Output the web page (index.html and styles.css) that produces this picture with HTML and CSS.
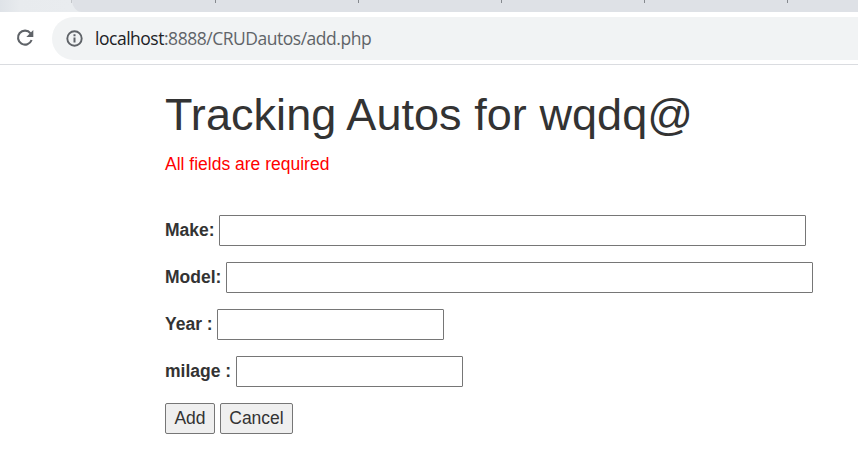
FILE: index.html
```html
<!DOCTYPE html>
<html lang="en">
<head>
<meta charset="utf-8">
<title>Tracking Autos</title>
<link rel="stylesheet" href="styles.css">
</head>
<body>
<header class="browser">
  <div class="tabs">
    <div class="tab-shade"><div class="tab-rest"></div></div>
    <i class="tick first"></i><i class="tick"></i><i class="tick"></i><i class="tick"></i><i class="tick"></i><i class="tick"></i>
  </div>
  <div class="toolbar">
    <svg class="reload" width="18" height="18" viewBox="0 0 18 18"><path d="M14.5 4.3A7 7 0 1 0 15.6 11" fill="none" stroke="#5f6368" stroke-width="2.1"/><path d="M17.3 1v7H10.3z" fill="#5f6368"/></svg>
    <div class="omnibox">
      <svg class="info" width="17" height="17" viewBox="0 0 17 17"><circle cx="8.5" cy="8.5" r="7.2" fill="none" stroke="#5f6368" stroke-width="1.9"/><path d="M7.5 4.2h2v2h-2zM7.5 7.5h2v5h-2z" fill="#5f6368"/></svg>
      <span class="url"><span class="host">localhost</span><span class="path">:8888/CRUDautos/add.php</span></span>
    </div>
  </div>
</header>
<main class="container">
  <h1>Tracking Autos for wqdq@</h1>
  <p class="error">All fields are required</p>
  <form>
    <div class="row"><label class="make" for="make">Make:</label><input id="make" class="wide" type="text"></div>
    <div class="row"><label class="model" for="model">Model:</label><input id="model" class="wide" type="text"></div>
    <div class="row"><label class="year" for="year">Year :</label><input id="year" type="text"></div>
    <div class="row"><label class="milage" for="milage">milage :</label><input id="milage" type="text"></div>
    <div class="row"><button class="add" type="button">Add</button><button class="cancel" type="button">Cancel</button></div>
  </form>
</main>
</body>
</html>
```
FILE: styles.css
```css
* { box-sizing: border-box; }
body {
  margin: 0;
  height: 451px;
  overflow: hidden;
  background: #fff;
  color: #333;
  font: 17.5px/25px "Liberation Sans", Arial, sans-serif;
}
.browser { height: 65px; border-bottom: 1px solid #dadce0; }
.tabs {
  position: relative;
  display: flex;
  height: 12px;
  padding-left: 71px;
  background: linear-gradient(90deg, #dfe3e8 0, #e8ebee 20px, #e9ecef 71px);
}
.tab-shade { position: absolute; left: 72px; right: 0; top: 0; height: 12px; }
.tab-rest { height: 12px; background: #dee1e6; border-bottom-left-radius: 10px 12px; }
.tick { position: relative; flex: none; width: 1px; height: 3px; margin-right: 142.1px; background: #85898e; }
.tick.first { margin-right: 143px; background: #c4c7cb; }
.tick:last-child { margin-right: 0; }
.toolbar { display: flex; height: 52px; padding: 5px 0 4px 16px; }
.reload { flex: none; margin: 12px 18px 0 0; }
.omnibox {
  display: flex;
  flex: 1;
  height: 43px;
  padding-left: 14px;
  border-radius: 22px 0 0 22px;
  background: #f1f3f4;
}
.info { flex: none; margin: 13px 12px 0 0; }
.url {
  font: 17.5px/43px "Open Sans", "Noto Sans", sans-serif;
  letter-spacing: -0.48px;
  white-space: nowrap;
}
.host { color: #202124; }
.path { color: #5f6368; }
.container { padding: 25px 0 0 165px; }
h1 { margin: 0 0 13px; font-size: 45px; line-height: 49px; font-weight: 500; letter-spacing: 0.05px; white-space: nowrap; }
.error { margin: 0 0 38px; color: #f00; }
.row { display: flex; height: 31px; margin-bottom: 16px; align-items: center; }
label { flex: none; font-weight: 700; line-height: 31px; white-space: nowrap; }
.make { width: 54px; }
.model { width: 61px; }
.year { width: 52px; }
.milage { width: 71px; }
input {
  width: 227px;
  height: 31px;
  padding: 1px 2px;
  border: 1px solid #767676;
  border-radius: 1px;
  background: #fff;
  font: inherit;
}
.wide { width: 587px; }
button {
  height: 31px;
  padding: 0;
  border: 1px solid #767676;
  border-radius: 2px;
  background: #efefef;
  color: #333;
  font: inherit;
}
.add { width: 50px; margin-right: 5px; }
.cancel { width: 73px; }
```
